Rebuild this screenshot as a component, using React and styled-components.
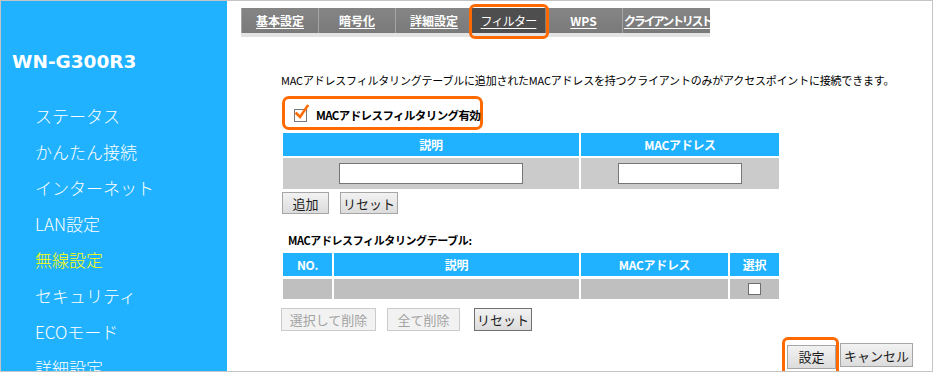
import React from "react";
import styled, { createGlobalStyle } from "styled-components";

const Global = createGlobalStyle`
  html, body { margin: 0; padding: 0; background: #fff; }
  body { font-family: "Noto Sans CJK JP", "Noto Sans", sans-serif; }
  * { box-sizing: border-box; }
`;

const BLUE = "#20b2ff";
const ORANGE = "#ff6a00";

const Frame = styled.div`
  width: 933px;
  height: 372px;
  border: 1px solid #c4c4c4;
  display: flex;
  overflow: hidden;
`;

const Sidebar = styled.nav`
  width: 226px;
  flex: none;
  background: ${BLUE};
  padding-top: 49px;
  overflow: hidden;
`;

const Brand = styled.div`
  font-family: "DejaVu Sans", Verdana, sans-serif;
  font-weight: 700;
  font-size: 18.5px;
  line-height: 24px;
  height: 24px;
  color: #fff;
  padding-left: 11px;
  margin-bottom: 24px;
`;

const MenuItem = styled.div`
  height: 36px;
  line-height: 36px;
  padding-left: 34px;
  font-size: 17px;
  font-weight: 300;
  color: ${(p) => (p.$active ? "#ffff00" : "#fff")};
  white-space: nowrap;
`;

const Main = styled.main`
  flex: 1;
  padding-top: 7px;
  display: flex;
  flex-direction: column;
`;

const TabBar = styled.div`
  margin-left: 14px;
  width: 469px;
  height: 29px;
  background: linear-gradient(#858585, #7a7a7a);
  border-bottom: 4px solid #e3e3e3;
  display: flex;
  flex: none;
`;

const Tab = styled.div`
  position: relative;
  width: ${(p) => p.$w}px;
  flex: none;
  height: 25px;
  display: flex;
  align-items: center;
  justify-content: ${(p) => (p.$left ? "flex-start" : "center")};
  padding-left: ${(p) => (p.$left ? "1px" : "0")};
  background: ${(p) => (p.$selected ? "#4e4e4e" : "transparent")};
  border-left: ${(p) => (p.$sep ? "1px solid #a5a5a5" : "none")};
  font-size: 12px;
  font-weight: ${(p) => (p.$selected ? 400 : 700)};
  letter-spacing: ${(p) => p.$ls || 0}px;
  color: #fff;
  white-space: nowrap;

  span {
    text-decoration: underline;
    text-underline-offset: 2px;
  }

  ${(p) =>
    p.$selected &&
    `
    &::after {
      content: "";
      position: absolute;
      left: -3px; right: -4px; top: -4px; bottom: -6px;
      border: 3px solid ${ORANGE};
      border-radius: 6px;
    }
  `}
`;

const Content = styled.div`
  padding-left: 54px;
  padding-right: 19px;
  display: flex;
  flex-direction: column;
  align-items: flex-start;
`;

const Description = styled.p`
  margin: 35px 0 0;
  font-size: 11px;
  line-height: 16px;
  color: #000;
  white-space: nowrap;
  letter-spacing: -0.2px;
`;

const Highlight = styled.div`
  border: 3px solid ${ORANGE};
  border-radius: 7px;
`;

const EnableBox = styled(Highlight)`
  margin: 8px 0 0 1px;
  width: 201px;
  height: 34px;
  display: flex;
  align-items: center;
  padding-left: 8px;
  gap: 7px;
`;

const EnableLabel = styled.span`
  font-size: 11.5px;
  font-weight: 700;
  letter-spacing: -0.6px;
  color: #000;
  margin-top: 3px;
  white-space: nowrap;
`;

const Grid = styled.div`
  margin-left: 2px;
  display: grid;
  grid-template-columns: ${(p) => p.$cols};
  column-gap: 2px;
  row-gap: ${(p) => p.$rowGap}px;
`;

const HeadCell = styled.div`
  background: ${BLUE};
  height: ${(p) => p.$h}px;
  display: flex;
  align-items: center;
  justify-content: center;
  color: #fff;
  font-size: 12px;
  font-weight: 700;
  letter-spacing: -0.3px;
`;

const BodyCell = styled.div`
  background: ${(p) => p.$bg};
  height: ${(p) => p.$h}px;
  display: flex;
  align-items: center;
  justify-content: center;
`;

const TextInput = styled.input`
  width: ${(p) => p.$w}px;
  height: 21px;
  border: 1px solid #767676;
  background: #fff;
  margin: 0;
  padding: 0 2px;
  outline: none;
`;

const ButtonRow = styled.div`
  display: flex;
  gap: ${(p) => p.$gap || 11}px;
  margin-top: ${(p) => p.$mt}px;
  margin-left: ${(p) => p.$ml || 0}px;
`;

const Button = styled.button`
  width: ${(p) => p.$w}px;
  height: ${(p) => p.$h || 22}px;
  margin: 0;
  padding: 0;
  font-family: "Noto Sans CJK JP", sans-serif;
  font-size: 13px;
  line-height: 1;
  color: ${(p) => (p.disabled ? "#a3a3a3" : "#1a1a1a")};
  background: ${(p) =>
    p.disabled ? "#f2f2f2" : "linear-gradient(#f2f2f2, #dcdcdc)"};
  border: 1px solid ${(p) => (p.disabled ? "#cbcbcb" : p.$dark ? "#707070" : "#a6a6a6")};
  border-radius: 0;
`;

const SectionLabel = styled.div`
  margin: 18px 0 0 7px;
  font-size: 11px;
  line-height: 16px;
  font-weight: 700;
  letter-spacing: -0.4px;
  color: #000;
`;

const SmallBox = styled.span`
  width: 13px;
  height: 12px;
  border: 1px solid #6e6e6e;
  background: #fff;
`;

const Footer = styled.div`
  align-self: flex-end;
  margin-top: 6px;
  display: flex;
  align-items: flex-start;
  gap: 1px;
`;

const ApplyWrap = styled(Highlight)`
  padding: 3px 0 6px 2px;
  border-radius: 6px;
`;

const CheckIcon = () => (
  <svg width="16" height="20" viewBox="0 0 16 20" style={{ marginTop: -2, flex: "none" }}>
    <rect x="1.5" y="7.5" width="12" height="12" fill="#fff" stroke="#777" />
    <path
      d="M3.5 11.5 L7 15 L14.5 4"
      fill="none"
      stroke={ORANGE}
      strokeWidth="2.6"
      strokeLinecap="square"
    />
  </svg>
);

const menu = [
  "ステータス",
  "かんたん接続",
  "インターネット",
  "LAN設定",
  "無線設定",
  "セキュリティ",
  "ECOモード",
  "詳細設定",
];

const tabs = [
  { label: "基本設定", w: 77, sep: true },
  { label: "暗号化", w: 77, sep: true },
  { label: "詳細設定", w: 77, sep: true },
  { label: "フィルター", w: 73, selected: true, ls: -0.8 },
  { label: "WPS", w: 77 },
  { label: "クライアントリスト", w: 88, left: true, sep: true, ls: -2.3 },
];

export default function App() {
  return (
    <>
      <Global />
      <Frame>
        <Sidebar>
          <Brand>WN-G300R3</Brand>
          {menu.map((m) => (
            <MenuItem key={m} $active={m === "無線設定"}>
              {m}
            </MenuItem>
          ))}
        </Sidebar>
        <Main>
          <TabBar>
            {tabs.map((t) => (
              <Tab
                key={t.label}
                $w={t.w}
                $sep={t.sep}
                $selected={t.selected}
                $left={t.left}
                $ls={t.ls}
              >
                <span>{t.label}</span>
              </Tab>
            ))}
          </TabBar>
          <Content>
            <Description>
              MACアドレスフィルタリングテーブルに追加されたMACアドレスを持つクライアントのみがアクセスポイントに接続できます。
            </Description>
            <EnableBox>
              <CheckIcon />
              <EnableLabel>MACアドレスフィルタリング有効</EnableLabel>
            </EnableBox>
            <Grid $cols="296px 198px" $rowGap={2} style={{ marginTop: 3 }}>
              <HeadCell $h={23}>説明</HeadCell>
              <HeadCell $h={23}>MACアドレス</HeadCell>
              <BodyCell $h={31} $bg="#cbcbcb">
                <TextInput $w={184} />
              </BodyCell>
              <BodyCell $h={31} $bg="#cbcbcb">
                <TextInput $w={124} />
              </BodyCell>
            </Grid>
            <ButtonRow $mt={3} $ml={1}>
              <Button $w={47}>追加</Button>
              <Button $w={58}>リセット</Button>
            </ButtonRow>
            <SectionLabel>MACアドレスフィルタリングテーブル:</SectionLabel>
            <Grid
              $cols="49px 245px 147px 49px"
              $rowGap={3}
              style={{ marginTop: 5 }}
            >
              <HeadCell $h={23}>NO.</HeadCell>
              <HeadCell $h={23}>説明</HeadCell>
              <HeadCell $h={23}>MACアドレス</HeadCell>
              <HeadCell $h={23}>選択</HeadCell>
              <BodyCell $h={20} $bg="#bfbfbf" />
              <BodyCell $h={20} $bg="#bfbfbf" />
              <BodyCell $h={20} $bg="#bfbfbf" />
              <BodyCell $h={20} $bg="#bfbfbf">
                <SmallBox />
              </BodyCell>
            </Grid>
            <ButtonRow $mt={9}>
              <Button $w={95} $h={23} disabled>
                選択して削除
              </Button>
              <Button $w={73} $h={23} disabled>
                全て削除
              </Button>
              <Button $w={58} $h={23} $dark style={{ marginLeft: 3 }}>
                リセット
              </Button>
            </ButtonRow>
            <Footer>
              <ApplyWrap>
                <Button $w={49} $h={24}>
                  設定
                </Button>
              </ApplyWrap>
              <Button $w={73} $h={24} style={{ marginTop: 6 }}>
                キャンセル
              </Button>
            </Footer>
          </Content>
        </Main>
      </Frame>
    </>
  );
}
